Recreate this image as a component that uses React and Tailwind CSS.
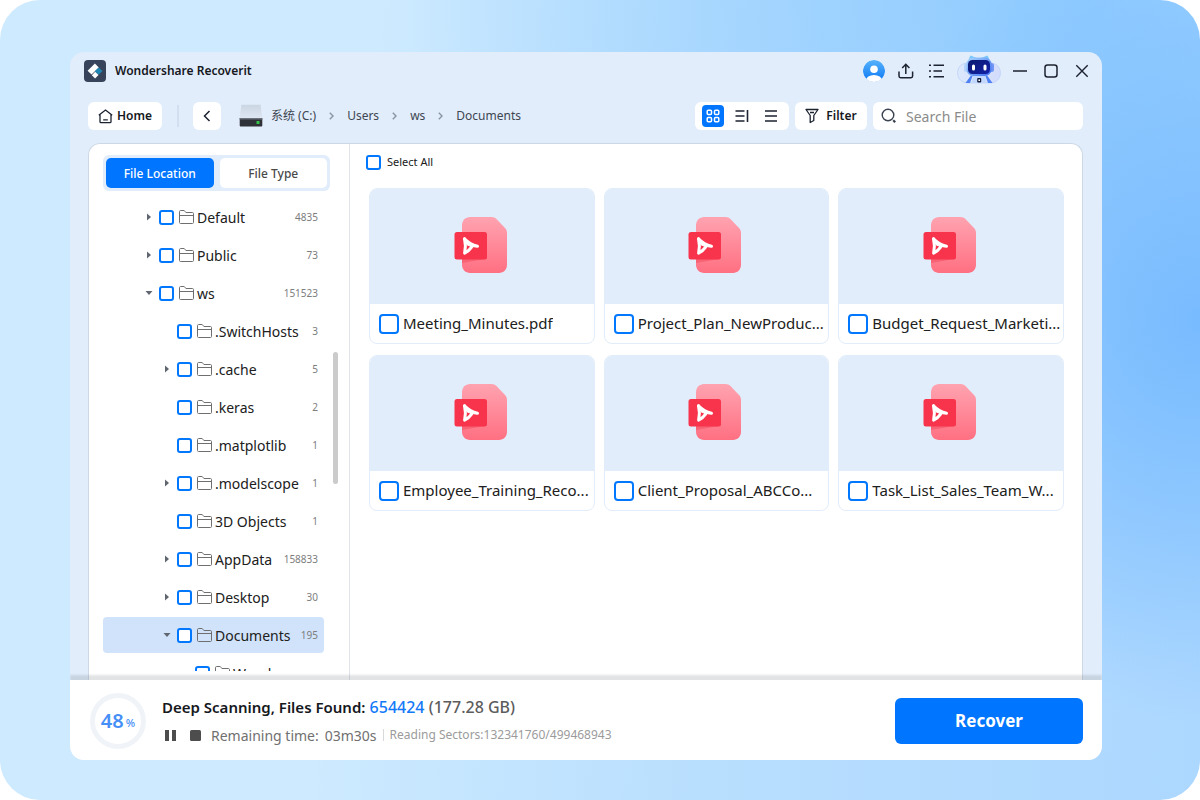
import { useState } from 'react'
import clsx from 'clsx'

const TREE = [
  { name: 'Default', count: 4835, level: 1, arrow: 'closed' },
  { name: 'Public', count: 73, level: 1, arrow: 'closed' },
  { name: 'ws', count: 151523, level: 1, arrow: 'open' },
  { name: '.SwitchHosts', count: 3, level: 2 },
  { name: '.cache', count: 5, level: 2, arrow: 'closed' },
  { name: '.keras', count: 2, level: 2 },
  { name: '.matplotlib', count: 1, level: 2 },
  { name: '.modelscope', count: 1, level: 2, arrow: 'closed' },
  { name: '3D Objects', count: 1, level: 2 },
  { name: 'AppData', count: 158833, level: 2, arrow: 'closed' },
  { name: 'Desktop', count: 30, level: 2, arrow: 'closed' },
  { name: 'Documents', count: 195, level: 2, arrow: 'open' },
  { name: 'Wond', level: 3 },
]

const INDENT = { 1: 'pl-[42px]', 2: 'pl-[60px]', 3: 'pl-[78px]' }

const FILES = [
  'Meeting_Minutes.pdf',
  'Project_Plan_NewProduc...',
  'Budget_Request_Marketi...',
  'Employee_Training_Reco...',
  'Client_Proposal_ABCCo...',
  'Task_List_Sales_Team_W...',
]

const CRUMBS = ['系统 (C:)', 'Users', 'ws', 'Documents']

function Logo() {
  return (
    <svg width="22" height="22" viewBox="0 0 22 22">
      <rect width="22" height="22" rx="4" fill="#36435b" />
      <path d="M3.6 10.8 10.9 3.6 14.8 7.4 7.5 14.6Z" fill="#fff" />
      <path d="M10.8 11.2 14.6 7.4 18.5 11 14.6 14.8Z" fill="#1f86b4" />
      <path d="M7.8 15.2 11.2 11.8 14.5 15.1 11.1 18.4Z" fill="#fff" />
    </svg>
  )
}

function Avatar() {
  return (
    <svg width="22" height="22" viewBox="0 0 22 22">
      <defs>
        <linearGradient id="avatar" x1="0" y1="0" x2="0" y2="1">
          <stop offset="0" stopColor="#55b2fb" />
          <stop offset="1" stopColor="#0c78f5" />
        </linearGradient>
        <clipPath id="avatarClip"><circle cx="11" cy="11" r="11" /></clipPath>
      </defs>
      <g clipPath="url(#avatarClip)">
        <circle cx="11" cy="11" r="11" fill="url(#avatar)" />
        <circle cx="11" cy="9.3" r="3.8" fill="#fff" />
        <ellipse cx="11" cy="20.5" rx="8" ry="5.6" fill="#fff" />
      </g>
    </svg>
  )
}

function ShareIcon() {
  return (
    <svg width="18" height="18" viewBox="0 0 18 18" fill="none" stroke="#1b2230" strokeWidth="1.5">
      <path d="M2 9.5V14.1a1.6 1.6 0 0 0 1.6 1.6H14a1.6 1.6 0 0 0 1.6-1.6V9.5" />
      <path d="M8.8 12V2.6M5.2 6 8.8 2.3 12.4 6" />
    </svg>
  )
}

function ListIcon() {
  return (
    <svg width="18" height="18" viewBox="0 0 18 18" stroke="#1b2230" strokeWidth="1.5">
      <path d="M2 3.3H4M6.5 3.3H17M2 9H4M6.5 9H15M2 14.7H4M6.5 14.7H17" />
    </svg>
  )
}

function Robot() {
  return (
    <svg width="44" height="32" viewBox="0 0 44 32">
      <defs>
        <linearGradient id="botFace" x1="0" y1="0" x2="1" y2="1">
          <stop offset="0" stopColor="#0b1a6e" />
          <stop offset="1" stopColor="#1420a8" />
        </linearGradient>
        <linearGradient id="botHead" x1="0" y1="0" x2="1" y2="1">
          <stop offset="0" stopColor="#a9d6ff" />
          <stop offset="1" stopColor="#3d6df0" />
        </linearGradient>
        <linearGradient id="botPill" x1="0" y1="0" x2="1" y2="0">
          <stop offset="0" stopColor="#dbe8fd" />
          <stop offset="1" stopColor="#d3dcfb" />
        </linearGradient>
      </defs>
      <path d="M11 8C4 8 .6 12.5 .6 18s4 10 10.4 10H33c6.4 0 10.4-4.5 10.4-10S40 8 33 8Z" fill="url(#botPill)" stroke="#b9cefa" strokeWidth=".7" />
      <path d="M11.5 4.5 13.5 .5 20 3Z" fill="#77c7fb" />
      <path d="M24 3 30.5 .5 32.5 4.5Z" fill="#77c7fb" />
      <rect x="7" y="8" width="5" height="9" rx="2.5" fill="#b4d4fc" />
      <rect x="32" y="8" width="5" height="9" rx="2.5" fill="#6f94f5" />
      <rect x="9.5" y="2.5" width="25" height="18.5" rx="6.5" fill="url(#botHead)" />
      <rect x="11" y="5" width="22" height="14" rx="4.5" fill="url(#botFace)" />
      <rect x="15" y="9.5" width="3" height="6" rx="1.5" fill="#fff" />
      <rect x="26.5" y="9.5" width="3" height="6" rx="1.5" fill="#fff" />
      <path d="M14.5 28 16 21H28L29.5 28Z" fill="#c3d8ff" />
      <path d="M13.5 21 8.5 28H13L15.5 21ZM30.5 21 35.5 28H31L28.5 21Z" fill="#4f82f3" />
      <rect x="20.2" y="23" width="4" height="4.5" rx="1" fill="#111a3a" />
      <circle cx="22.2" cy="25.2" r=".9" fill="#fff" />
    </svg>
  )
}

function DriveIcon() {
  return (
    <svg width="24" height="24" viewBox="0 0 24 24">
      <defs>
        <linearGradient id="driveTop" x1="0" y1="0" x2="0" y2="1">
          <stop offset="0" stopColor="#cbd6e3" />
          <stop offset="1" stopColor="#dde6f1" />
        </linearGradient>
      </defs>
      <path d="M2.4 .8H21.6L23.3 14H.7Z" fill="url(#driveTop)" />
      <path d="M.7 14H23.3V21.5a1 1 0 0 1-1 1H1.7a1 1 0 0 1-1-1Z" fill="#2e3137" />
      <path d="M.7 14H23.3V15.5H.7Z" fill="#6d737c" />
      <rect x="17.5" y="17" width="3" height="3" rx=".5" fill="#35c44a" />
    </svg>
  )
}

function FolderIcon() {
  return (
    <svg width="15" height="14" viewBox="0 0 15 14" fill="none" stroke="#6f6f6f" className="shrink-0">
      <path d="M.5 12.5V1.7C.5 1 .9.5 1.6.5H5.2L6.9 2.5H13.4c.7 0 1.1.4 1.1 1.1V12.5c0 .6-.4 1-1 1H1.5c-.6 0-1-.4-1-1Z" />
      <path d="M.5 5.5H14.5" />
    </svg>
  )
}

function PdfIcon() {
  return (
    <svg width="54" height="58" viewBox="0 0 54 58">
      <defs>
        <linearGradient id="pdfPage" x1="0" y1="0" x2="0" y2="1">
          <stop offset="0" stopColor="#ffa3b0" />
          <stop offset="1" stopColor="#ff7082" />
        </linearGradient>
      </defs>
      <path d="M16 1H37.5c2 0 3.8.8 5.2 2.2L51 12c1.3 1.4 2 3.2 2 5.2V49c0 4.4-3.6 8-8 8H16c-4.4 0-8-3.6-8-8V9c0-4.4 3.6-8 8-8Z" fill="url(#pdfPage)" />
      <path d="M8 43H31.5L8 47Z" fill="#f04f63" opacity=".55" />
      <rect x=".5" y="16" width="32.5" height="27.5" rx="2.5" fill="#f7344b" />
      <g fill="none" stroke="#fff" strokeWidth="3" strokeLinecap="round" strokeLinejoin="round">
        <path d="M10.5 22.8C11.8 28 11.8 32 10.6 37.2C13.5 35.8 16 33.6 17.6 31.2" />
        <path d="M10.5 22.8C14 26.4 19 29.2 23.5 30.3L16.5 29.3" />
        <path d="M12.6 26.5 14.5 28.3" />
      </g>
    </svg>
  )
}

function Checkbox({ label, large, ...rest }) {
  return (
    <input
      type="checkbox"
      aria-label={label}
      className={clsx(
        'appearance-none shrink-0 border-2 border-[#0077ff] bg-white checked:bg-[#0077ff]',
        large ? 'size-5 rounded-[4px]' : 'size-[15px] rounded-[3px]'
      )}
      {...rest}
    />
  )
}

function TitleBar() {
  return (
    <header className="flex h-[37px] shrink-0 items-center pl-[14px] pr-[13px]">
      <Logo />
      <h1 className="ml-[9px] text-[12px] font-semibold text-[#15181d]">Wondershare Recoverit</h1>
      <div className="ml-auto flex items-center gap-3">
        <button type="button" aria-label="Account"><Avatar /></button>
        <button type="button" aria-label="Share"><ShareIcon /></button>
        <button type="button" aria-label="Menu"><ListIcon /></button>
        <button type="button" aria-label="Assistant"><Robot /></button>
      </div>
      <div className="ml-3 flex items-center gap-[17px]">
        <button type="button" aria-label="Minimize">
          <svg width="14" height="14" viewBox="0 0 14 14" stroke="#1b2230" strokeWidth="1.5"><path d="M0 7H14" /></svg>
        </button>
        <button type="button" aria-label="Maximize">
          <svg width="14" height="14" viewBox="0 0 14 14" fill="none" stroke="#1b2230" strokeWidth="1.5"><rect x="1" y="1" width="12" height="12" rx="2.5" /></svg>
        </button>
        <button type="button" aria-label="Close">
          <svg width="14" height="14" viewBox="0 0 14 14" stroke="#1b2230" strokeWidth="1.4"><path d="M1.3 1.3 12.7 12.7M12.7 1.3 1.3 12.7" /></svg>
        </button>
      </div>
    </header>
  )
}

function Toolbar() {
  const [view, setView] = useState('grid')

  const views = [
    {
      id: 'grid',
      icon: (
        <g fill="none" strokeWidth="1.5">
          <rect x="1.2" y="1.2" width="4.3" height="4.3" rx="1" />
          <rect x="8.5" y="1.2" width="4.3" height="4.3" rx="1" />
          <rect x="1.2" y="8.5" width="4.3" height="4.3" rx="1" />
          <rect x="8.5" y="8.5" width="4.3" height="4.3" rx="1" />
        </g>
      ),
    },
    { id: 'detail', icon: <path d="M.5 2H9.5M.5 7H9.5M.5 12H9.5M12.5 1V13" strokeWidth="1.6" /> },
    { id: 'list', icon: <path d="M1 2H13M1 7H13M1 12H13" strokeWidth="1.5" /> },
  ]

  return (
    <div className="flex shrink-0 items-center py-[13px] pl-[18px] pr-[19px]">
      <button type="button" className="flex h-7 w-[74px] items-center justify-center gap-1 rounded-md bg-white text-[12px] font-semibold text-[#15181d]">
        <svg width="15" height="15" viewBox="0 0 15 15" fill="none" stroke="#1b2230" strokeWidth="1.3">
          <path d="M.8 6.3 7.5 1 14.2 6.3M2 5.5V12.7c0 .6.4 1 1 1H12c.6 0 1-.4 1-1V5.5M5.2 10.8H9.8" />
        </svg>
        Home
      </button>
      <span className="ml-[15px] h-[22px] w-[2px] bg-[#d3dfee]" />
      <button type="button" aria-label="Back" className="ml-[14px] flex size-7 items-center justify-center rounded-md bg-white">
        <svg width="8" height="12" viewBox="0 0 8 12" fill="none" stroke="#1b2230" strokeWidth="1.5"><path d="M6.5 1 1.5 6 6.5 11" /></svg>
      </button>
      <nav aria-label="Path" className="ml-[18px] flex items-center text-[12px] text-[#3d4651]">
        <DriveIcon />
        {CRUMBS.map((crumb, i) => (
          <span key={crumb} className="flex items-center">
            {i > 0 && (
              <svg width="5" height="8" viewBox="0 0 5 8" fill="none" stroke="#8a94a3" strokeWidth="1.4" className="ml-[13px] mr-[5px]">
                <path d="M.8.8 4 4 .8 7.2" />
              </svg>
            )}
            <a href="#path" className="ml-2">{crumb}</a>
          </span>
        ))}
      </nav>

      <div className="ml-auto flex items-center gap-[6px]">
        <div className="flex h-7 items-center gap-[7px] rounded-md bg-white px-[7px]">
          {views.map(v => (
            <button
              key={v.id}
              type="button"
              aria-label={`${v.id} view`}
              onClick={() => setView(v.id)}
              className={clsx('flex size-[22px] items-center justify-center rounded-[4px]', view === v.id ? 'bg-[#0075ff] text-white' : 'text-[#1b2230]')}
            >
              <svg width="14" height="14" viewBox="0 0 14 14" stroke="currentColor">{v.icon}</svg>
            </button>
          ))}
        </div>
        <button type="button" className="flex h-7 w-[72px] items-center justify-center gap-[7px] rounded-md bg-white text-[12px] font-semibold text-[#15181d]">
          <svg width="14" height="16" viewBox="0 0 14 16" fill="none" stroke="#1b2230" strokeWidth="1.3" strokeLinejoin="round">
            <path d="M1 1.5H13L8.8 7.5V12.5L5.2 14.5V7.5L1 1.5ZM5 4.5H9" />
          </svg>
          Filter
        </button>
        <label className="flex h-7 w-[210px] items-center rounded-md bg-white pl-2">
          <svg width="16" height="16" viewBox="0 0 16 16" fill="none" stroke="#3b4350" strokeWidth="1.4">
            <circle cx="7" cy="7" r="5.8" />
            <path d="M12.2 12.2 14.2 14.2" strokeWidth="2.2" />
          </svg>
          <input type="search" aria-label="Search File" placeholder="Search File" className="ml-[9px] min-w-0 flex-1 bg-transparent text-[14px] text-gray-800 outline-none placeholder:text-[#8b8b8b]" />
        </label>
      </div>
    </div>
  )
}

function TreeRow({ item, selected, onSelect }) {
  return (
    <li
      onClick={onSelect}
      className={clsx('mb-[2px] flex h-9 items-center rounded pr-[6px]', INDENT[item.level], selected && 'bg-[#d1e3fb]')}
    >
      <span className="mr-[6px] flex w-2 shrink-0 justify-center">
        {item.arrow === 'closed' && <svg width="4" height="8" viewBox="0 0 4 8" fill="#5f6670"><path d="M0 .5 4 4 0 7.5Z" /></svg>}
        {item.arrow === 'open' && <svg width="8" height="4" viewBox="0 0 8 4" fill="#5f6670"><path d="M.5 0H7.5L4 4Z" /></svg>}
      </span>
      <Checkbox label={item.name} />
      <span className="ml-[5px] flex items-center gap-[3px] text-[14px] text-[#202020]">
        <FolderIcon />
        {item.name}
      </span>
      <span className="ml-auto text-[10px] text-[#7d7d7d]">{item.count}</span>
    </li>
  )
}

function Sidebar() {
  const [tab, setTab] = useState('File Location')
  const [selected, setSelected] = useState('Documents')

  return (
    <aside className="flex w-[261px] shrink-0 flex-col border-r border-[#dfe3e8] pb-[9px] pl-[14px]">
      <div className="mr-[19px] mt-[11px] flex shrink-0 gap-[6px] rounded-md bg-[#e1edfb] p-[3px]">
        {['File Location', 'File Type'].map(t => (
          <button
            key={t}
            type="button"
            onClick={() => setTab(t)}
            className={clsx('h-[30px] flex-1 rounded-[5px] pt-[2px] text-[12px] font-medium', tab === t ? 'bg-[#0075ff] text-white' : 'bg-white text-[#4a4a4a]')}
          >
            {t}
          </button>
        ))}
      </div>
      {/* the last row runs under the lower edge of the list */}
      <div className="mt-[8px] flex min-h-0 flex-1 overflow-hidden">
        <ul className="mr-[9px] w-[221px] shrink-0">
          {TREE.map(item => (
            <TreeRow key={item.name} item={item} selected={item.name === selected} onSelect={() => setSelected(item.name)} />
          ))}
        </ul>
        <div className="mt-[153px] h-[132px] w-[5px] rounded-full bg-[#cbcbcb]" />
      </div>
    </aside>
  )
}

function FileCard({ name }) {
  return (
    <li className="overflow-hidden rounded-[8px] border border-[#e1edfb] bg-white">
      <div className="flex h-[115px] items-center justify-center bg-[#e1edfb] pb-1 pr-[2px]">
        <PdfIcon />
      </div>
      <label className="flex h-[39px] items-center gap-1 pl-[9px]">
        <Checkbox large />
        <span className="truncate text-[15px] text-[#202020]">{name}</span>
      </label>
    </li>
  )
}

function Footer() {
  return (
    <footer className="z-10 flex h-[80px] shrink-0 items-center bg-white pl-5 pr-[19px] pt-[2px] shadow-[0_-5px_2px_rgba(90,100,110,0.18)]">
      <div className="flex size-14 items-center justify-center rounded-full border-[5px] border-[#f0f4f8] text-[#468ff7]">
        <span className="text-[20px] font-semibold">48</span>
        <span className="ml-[2px] mt-[5px] text-[11px] font-medium">%</span>
      </div>
      <div className="ml-4">
        <p className="text-[16px] leading-6 font-medium">
          <span className="text-[15px] font-semibold text-[#15181d]">Deep Scanning, Files Found:</span>{' '}
          <span className="text-[#1279f8]">654424</span>{' '}
          <span className="text-[#5c5c5c]">(177.28 GB)</span>
        </p>
        <div className="mt-1 flex h-6 items-center text-[#4d4d4d]">
          <button type="button" aria-label="Pause" className="ml-[3px]">
            <svg width="11" height="11" viewBox="0 0 11 11" fill="currentColor"><path d="M0 0H4V11H0ZM7 0H11V11H7Z" /></svg>
          </button>
          <button type="button" aria-label="Stop" className="ml-[14px]">
            <svg width="11" height="11" viewBox="0 0 11 11" fill="currentColor"><rect width="11" height="11" rx="1.5" /></svg>
          </button>
          <span className="ml-[10px] text-[14px] text-[#707070]">Remaining time:</span>
          <span className="ml-[6px] text-[14px] text-[#707070]">03m30s</span>
          <span className="mx-[6px] h-3 w-px bg-[#d9d9d9]" />
          <span className="text-[12px] text-[#9b9b9b]">Reading Sectors:132341760/499468943</span>
        </div>
      </div>
      <button type="button" className="ml-auto h-[46px] w-[188px] rounded-md bg-[#0075ff] text-[17px] font-bold text-white">Recover</button>
    </footer>
  )
}

export default function App() {
  return (
    <div className="h-screen bg-white font-['Noto_Sans','Noto_Sans_CJK_SC',sans-serif]">
      <div className="flex h-full flex-col rounded-[40px] bg-[radial-gradient(ellipse_30%_50%_at_100%_40%,#78bbff_0%,transparent_100%),radial-gradient(circle_at_90%_0%,#8fcbff_0%,transparent_50%),linear-gradient(95deg,#cdeaff_0%,#cdeaff_30%,#b9dffe_60%,#acd7ff_100%)] pb-10 pl-[70px] pr-[98px] pt-[52px]">
        <main className="flex min-h-0 flex-1 flex-col overflow-hidden rounded-[14px] bg-[#e2edfb]">
          <TitleBar />
          <Toolbar />
          <div className="ml-[18px] mr-[19px] flex min-h-0 flex-1 overflow-hidden rounded-t-[12px] border border-b-0 border-[#cdd8e6] bg-white">
            <Sidebar />
            <section className="min-w-0 flex-1 pl-4 pr-[18px]">
              <label className="mt-[10px] flex items-center gap-[6px] text-[11px] leading-4 text-[#202020]">
                <Checkbox />
                Select All
              </label>
              <ul className="mt-[18px] grid grid-cols-3 gap-x-[9px] gap-y-[11px] pl-[3px]">
                {FILES.map(name => <FileCard key={name} name={name} />)}
              </ul>
            </section>
          </div>
          <Footer />
        </main>
      </div>
    </div>
  )
}
